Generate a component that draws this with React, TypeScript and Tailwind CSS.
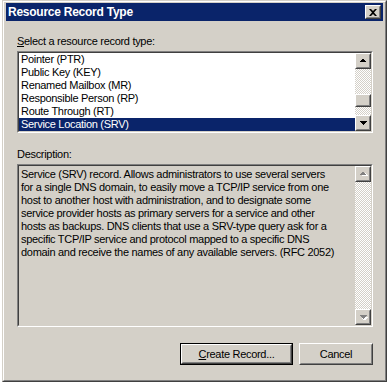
import React from 'react'

const records = [
  'Pointer (PTR)',
  'Public Key (KEY)',
  'Renamed Mailbox (MR)',
  'Responsible Person (RP)',
  'Route Through (RT)',
  'Service Location (SRV)',
]

const description = [
  'Service (SRV) record. Allows administrators to use several servers',
  'for a single DNS domain, to easily move a TCP/IP service from one',
  'host to another host with administration, and to designate some',
  'service provider hosts as primary servers for a service and other',
  'hosts as backups. DNS clients that use a SRV-type query ask for a',
  'specific TCP/IP service and protocol mapped to a specific DNS',
  'domain and receive the names of any available servers. (RFC 2052)',
]

const Raised = ({ className, children }: { className?: string; children?: React.ReactNode }) => (
  <div className={`border border-t-white border-l-white border-b-[#404040] border-r-[#404040] ${className ?? ''}`}>
    <div className="w-full h-full border border-t-[#d4d0c8] border-l-[#d4d0c8] border-b-[#808080] border-r-[#808080] bg-[#d4d0c8] flex items-center justify-center">
      {children}
    </div>
  </div>
)

const Arrow = ({ up, disabled }: { up?: boolean; disabled?: boolean }) => (
  <svg width="9" height="6" viewBox="0 0 9 6">
    {disabled && (
      <path d={up ? 'M5 1h1v1h1v1h1v1H2V3h1V2h1V1z' : 'M2 2h6v1H7v1H6v1H5v1H4V5H3V4H2z'} fill="#fff" transform="translate(1,1)" />
    )}
    <path
      d={up ? 'M4 1h1v1h1v1h1v1H1V3h1V2h1V1z' : 'M1 1h7v1H7v1H6v1H5v1H4V4H3V3H2V2H1z'}
      fill={disabled ? '#808080' : '#000'}
    />
  </svg>
)

const Track = ({ height }: { height: number }) => (
  <div
    className="w-[16px] bg-[repeating-conic-gradient(#ffffff_0%_25%,#d4d0c8_0%_50%)] bg-[length:2px_2px]"
    style={{ height }}
  />
)

const ScrollBar = ({ track1, thumb, track2, disabled }: { track1: number; thumb?: number; track2?: number; disabled?: boolean }) => (
  <div className="w-[16px] flex flex-col shrink-0">
    <Raised className="w-[16px] h-[16px]">
      <Arrow up disabled={disabled} />
    </Raised>
    <Track height={track1} />
    {thumb ? (
      <div style={{ height: thumb }}>
        <Raised className="w-[16px] h-full" />
      </div>
    ) : null}
    {track2 ? <Track height={track2} /> : null}
    <Raised className="w-[16px] h-[16px]">
      <Arrow disabled={disabled} />
    </Raised>
  </div>
)

const Sunken = ({ className, inner, children }: { className?: string; inner?: string; children?: React.ReactNode }) => (
  <div className={`border border-t-[#808080] border-l-[#808080] border-b-white border-r-white ${className ?? ''}`}>
    <div className={`w-full h-full border border-t-[#404040] border-l-[#404040] border-b-[#d4d0c8] border-r-[#d4d0c8] flex ${inner ?? ''}`}>
      {children}
    </div>
  </div>
)

export default function App() {
  return (
    <div
      className="w-[391px] h-[384px] bg-white text-[11px] leading-[13px] tracking-[-0.3px] text-black"
      style={{ fontFamily: '"Liberation Sans", Arial, sans-serif' }}
    >
      <div className="ml-[2px] w-[385px] h-[382px] border border-t-[#d4d0c8] border-l-[#d4d0c8] border-b-[#404040] border-r-[#404040]">
        <div className="w-full h-full border border-t-white border-l-white border-b-[#808080] border-r-[#808080] bg-[#d4d0c8] pt-[1px] px-[2px] flex flex-col">
          {/* title bar */}
          <div className="h-[18px] bg-[#0a246a] flex items-center justify-between pl-[2px] pr-[2px] shrink-0">
            <span className="text-white font-bold text-[12px] leading-[14px] tracking-[-0.25px]">Resource Record Type</span>
            <Raised className="w-[16px] h-[14px]">
              <svg width="8" height="7" viewBox="0 0 8 7">
                <path d="M0 0h2l2 2 2-2h2L5 3.5 8 7H6L4 5 2 7H0l3-3.5z" fill="#000" />
              </svg>
            </Raised>
          </div>

          <div className="pl-[11px] pt-[14px] flex flex-col">
            <div className="h-[13px]">
              <span className="underline">S</span>elect a resource record type:
            </div>

            <Sunken className="mt-[3px] w-[356px] h-[82px]" inner="bg-white">
              <div className="flex-1 flex flex-col">
                {records.map((r, i) => (
                  <div
                    key={r}
                    className={
                      i === records.length - 1
                        ? 'h-[13px] pl-[2px] bg-[#0a246a] text-white whitespace-nowrap'
                        : 'h-[13px] pl-[2px] whitespace-nowrap'
                    }
                  >
                    {r}
                  </div>
                ))}
              </div>
              <ScrollBar track1={25} thumb={13} track2={8} />
            </Sunken>

            <div className="mt-[15px] h-[13px]">Description:</div>

            <Sunken className="mt-[3px] w-[356px] h-[163px]" inner="bg-[#d4d0c8]">
              <div className="flex-1 pl-[2px] pt-[2px]">
                {description.map((l) => (
                  <div key={l} className="h-[13px] whitespace-nowrap">
                    {l}
                  </div>
                ))}
              </div>
              <ScrollBar track1={127} disabled />
            </Sunken>

            <div className="mt-[16px] w-[356px] flex justify-end gap-[6px]">
              <div className="border border-black w-[113px] h-[22px]">
                <Raised className="w-full h-full">
                  <span>
                    <span className="underline">C</span>reate Record...
                  </span>
                </Raised>
              </div>
              <Raised className="w-[74px] h-[22px]">
                <span>Cancel</span>
              </Raised>
            </div>
          </div>
        </div>
      </div>
    </div>
  )
}
